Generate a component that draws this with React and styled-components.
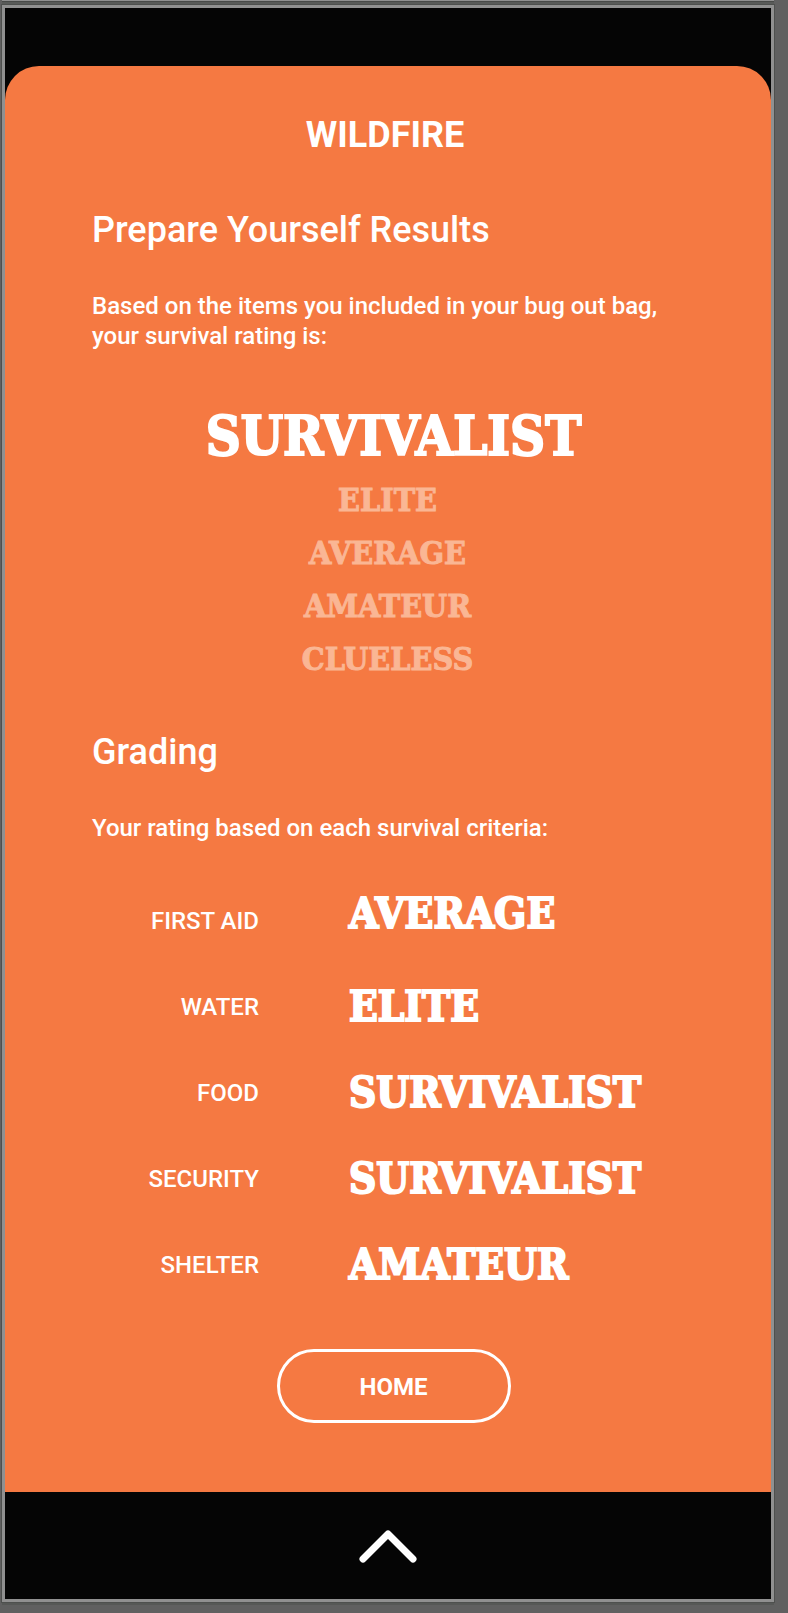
import React from "react";
import styled, { createGlobalStyle } from "styled-components";

const GlobalStyle = createGlobalStyle`
  *, *::before, *::after { box-sizing: border-box; }
  body {
    margin: 0;
    background: #606060;
    color: #fff;
    font-family: Roboto, "Liberation Sans", sans-serif;
  }
`;

const Canvas = styled.div`
  padding: 0 14px 11px 2px;
`;

const ArtboardEdge = styled.div`
  height: 5px;
  border-top: 1px solid #909090;
  background: #585a58;
  box-shadow: inset 0 1px 0 #484a48;
`;

const Phone = styled.div`
  border: 3px solid #909090;
  background: #050505;
  box-shadow: 0 0 0 1px #4e504e, 0 3px 0 #565856;
  padding-top: 58px;
`;

const Screen = styled.main`
  display: flow-root;
  background: #f57942;
  border-radius: 34px 34px 0 0;
`;

const Title = styled.h1`
  margin: 48px 6px 53px 0;
  font-size: 36px;
  line-height: 42px;
  font-weight: 700;
  text-align: center;
`;

const Content = styled.div`
  display: flex;
  flex-direction: column;
  padding: 0 76px 69px 87px;
`;

const Heading = styled.h2`
  margin: 0 0 40px;
  font-size: 36px;
  line-height: 42px;
  font-weight: 500;
`;

const Text = styled.p`
  margin: 0;
  font-size: 24px;
  line-height: 30px;
  font-weight: 500;
`;

const slab = `
  font-family: "DejaVu Serif Condensed", "DejaVu Serif", serif;
  font-weight: 700;
`;

const Ratings = styled.ul`
  margin: 53px 0 45px;
  padding: 0;
  list-style: none;
  text-align: center;
`;

const Rating = styled.li`
  ${slab}
  margin-bottom: ${(p) => (p.$earned ? 6 : 0)}px;
  padding-right: ${(p) => (p.$earned ? 0 : 12)}px;
  font-size: ${(p) => (p.$earned ? 54 : 32)}px;
  line-height: ${(p) => (p.$earned ? 64 : 53)}px;
  color: ${(p) => (p.$earned ? "#fff" : "#fab694")};
  -webkit-text-stroke: ${(p) => (p.$earned ? 2 : 1)}px currentColor;
`;

const Grades = styled.table`
  width: 100%;
  margin-top: 46px;
  border-collapse: collapse;
  table-layout: fixed;
`;

const GradeRow = styled.tr`
  height: 86px;
  vertical-align: top;
`;

const Criterion = styled.th`
  width: 167px;
  padding: 18px 0 0;
  font-size: 24px;
  line-height: 29px;
  font-weight: 500;
  text-align: right;
  white-space: nowrap;
`;

const Grade = styled.td`
  ${slab}
  padding: 0 0 0 90px;
  font-size: 42px;
  line-height: 50px;
  white-space: nowrap;
  -webkit-text-stroke: 2px currentColor;

  ${GradeRow} + ${GradeRow} & {
    padding-top: 7px;
  }
`;

const HomeButton = styled.button`
  align-self: center;
  width: 234px;
  height: 74px;
  margin-top: 30px;
  padding: 2px 0 0;
  border: 3px solid #fff;
  border-radius: 37px;
  background: none;
  color: inherit;
  font: 700 24px/29px Roboto, "Liberation Sans", sans-serif;
`;

const Footer = styled.footer`
  display: flex;
  justify-content: center;
  padding: 36px 0 35px;
`;

const ExpandButton = styled.button`
  display: flex;
  padding: 0;
  border: 0;
  background: none;
  color: #fff;
`;

const ratings = ["Survivalist", "Elite", "Average", "Amateur", "Clueless"];
const earned = "Survivalist";

const grades = [
  ["First aid", "Average"],
  ["Water", "Elite"],
  ["Food", "Survivalist"],
  ["Security", "Survivalist"],
  ["Shelter", "Amateur"],
];

export default function App() {
  return (
    <>
      <GlobalStyle />
      <Canvas>
        <ArtboardEdge />
        <Phone>
          <Screen>
            <Title>WILDFIRE</Title>
            <Content>
              <Heading>Prepare Yourself Results</Heading>
              <Text>
                Based on the items you included in your bug out bag, your
                survival rating is:
              </Text>
              <Ratings>
                {ratings.map((name) => (
                  <Rating key={name} $earned={name === earned}>
                    {name.toUpperCase()}
                  </Rating>
                ))}
              </Ratings>
              <Heading>Grading</Heading>
              <Text>Your rating based on each survival criteria:</Text>
              <Grades>
                <tbody>
                  {grades.map(([criterion, grade]) => (
                    <GradeRow key={criterion}>
                      <Criterion scope="row">
                        {criterion.toUpperCase()}
                      </Criterion>
                      <Grade>{grade.toUpperCase()}</Grade>
                    </GradeRow>
                  ))}
                </tbody>
              </Grades>
              <HomeButton type="button">HOME</HomeButton>
            </Content>
          </Screen>
          <Footer>
            <ExpandButton type="button" aria-label="Expand">
              <svg width="60" height="36" viewBox="0 0 60 36" fill="none">
                <path
                  d="M5 31 30 6 55 31"
                  stroke="currentColor"
                  strokeWidth="7"
                  strokeLinecap="round"
                  strokeLinejoin="round"
                />
              </svg>
            </ExpandButton>
          </Footer>
        </Phone>
      </Canvas>
    </>
  );
}
